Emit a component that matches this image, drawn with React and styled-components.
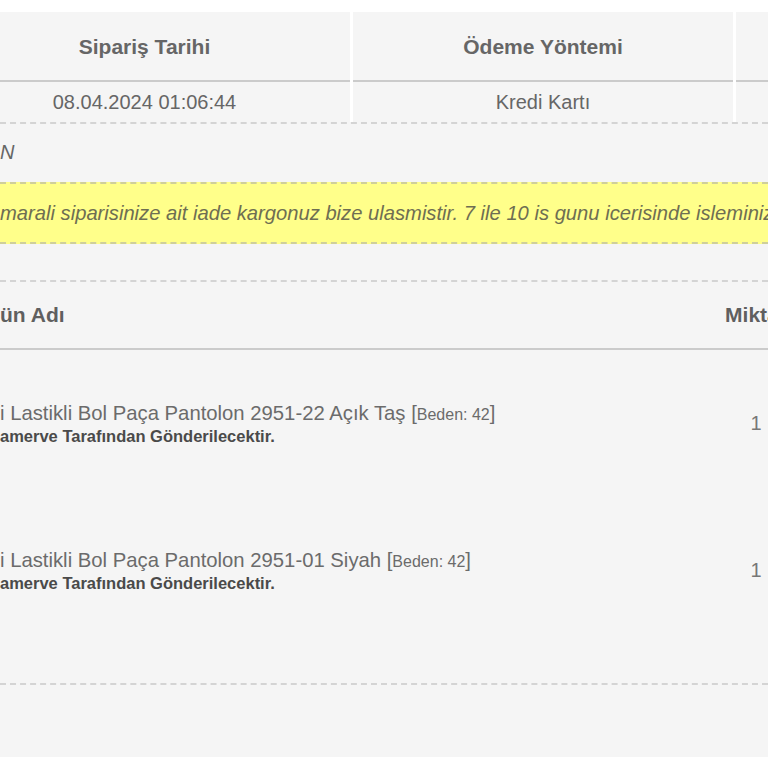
import React from "react";
import styled, { createGlobalStyle } from "styled-components";

const GlobalStyle = createGlobalStyle`
  html, body { margin: 0; padding: 0; background: #ffffff; overflow: hidden; }
  body { font-family: "Liberation Sans", Arial, sans-serif; }
  * { box-sizing: border-box; }
`;

const Page = styled.div`
  width: 768px;
  height: 768px;
  padding-top: 12px;
  overflow: hidden;
`;

const Panel = styled.div`
  background: #f5f5f5;
  height: 745px;
  overflow: hidden;
`;

const InfoTable = styled.div`
  display: grid;
  grid-template-columns: 411px 380px 120px;
  column-gap: 3px;
  background: #ffffff;
  margin-left: -61px;
  width: 917px;
`;

const HeadCell = styled.div`
  background: #f5f5f5;
  height: 70px;
  border-bottom: 2px solid #cbcbcb;
  display: flex;
  align-items: center;
  justify-content: center;
  font-size: 21px;
  font-weight: bold;
  color: #666;
  padding-top: 2px;
`;

const DataCell = styled.div`
  background: #f5f5f5;
  height: 40px;
  display: flex;
  align-items: center;
  justify-content: center;
  font-size: 20px;
  color: #666;
`;

const Dashed = styled.div`
  border-top: 2px dashed #d4d4d4;
`;

const StatusRow = styled.div`
  height: 58px;
  display: flex;
  align-items: center;
  font-size: 20px;
  font-style: italic;
  color: #666;
  padding-bottom: 2px;
`;

const Notice = styled.div`
  background: #ffff8a;
  border-top: 2px dashed #cfcf9a;
  border-bottom: 2px dashed #cfcf9a;
  height: 62px;
  display: flex;
  align-items: center;
  white-space: nowrap;
  font-size: 20.2px;
  font-style: italic;
  color: #6e6e52;
  padding-top: 1px;
`;

const Spacer = styled.div`
  height: ${(p) => p.h}px;
`;

const ProductGrid = styled.div`
  display: grid;
  grid-template-columns: 711px 90px;
  width: 801px;
`;

const ProdHead = styled.div`
  height: 68px;
  display: flex;
  align-items: center;
  justify-content: ${(p) => (p.center ? "center" : "flex-start")};
  font-size: 21px;
  font-weight: bold;
  color: #5f5f5f;
  white-space: nowrap;
  border-bottom: 2px solid #cbcbcb;
`;

const ProdCell = styled.div`
  height: 147px;
  display: flex;
  flex-direction: column;
  justify-content: center;
  align-items: ${(p) => (p.center ? "center" : "flex-start")};
  white-space: nowrap;
`;

const ProdName = styled.div`
  font-size: 20.3px;
  line-height: 23px;
  color: #6b6b6b;
`;

const Size = styled.span`
  font-size: 16px;
`;

const Seller = styled.div`
  font-size: 16.5px;
  line-height: 20px;
  font-weight: bold;
  color: #4a4a4a;
`;

const Qty = styled.div`
  font-size: 20px;
  color: #777;
`;

const items = [
  { name: "i Lastikli Bol Paça Pantolon 2951-22 Açık Taş", size: "42" },
  { name: "i Lastikli Bol Paça Pantolon 2951-01 Siyah", size: "42" },
];

export default function App() {
  return (
    <>
      <GlobalStyle />
      <Page>
        <Panel>
          <InfoTable>
            <HeadCell>Sipariş Tarihi</HeadCell>
            <HeadCell>Ödeme Yöntemi</HeadCell>
            <HeadCell />
            <DataCell>08.04.2024 01:06:44</DataCell>
            <DataCell>Kredi Kartı</DataCell>
            <DataCell />
          </InfoTable>
          <Dashed />
          <StatusRow>N</StatusRow>
          <Notice>
            marali siparisinize ait iade kargonuz bize ulasmistir. 7 ile 10 is gunu icerisinde isleminiz
          </Notice>
          <Spacer h={36} />
          <Dashed />
          <ProductGrid>
            <ProdHead>ün Adı</ProdHead>
            <ProdHead center>Miktar</ProdHead>
            {items.map((it, i) => (
              <React.Fragment key={i}>
                <ProdCell>
                  <ProdName>
                    {it.name} [<Size>Beden: {it.size}</Size>]
                  </ProdName>
                  <Seller>amerve Tarafından Gönderilecektir.</Seller>
                </ProdCell>
                <ProdCell center>
                  <Qty>1</Qty>
                </ProdCell>
              </React.Fragment>
            ))}
          </ProductGrid>
          <Spacer h={39} />
          <Dashed />
        </Panel>
      </Page>
    </>
  );
}
